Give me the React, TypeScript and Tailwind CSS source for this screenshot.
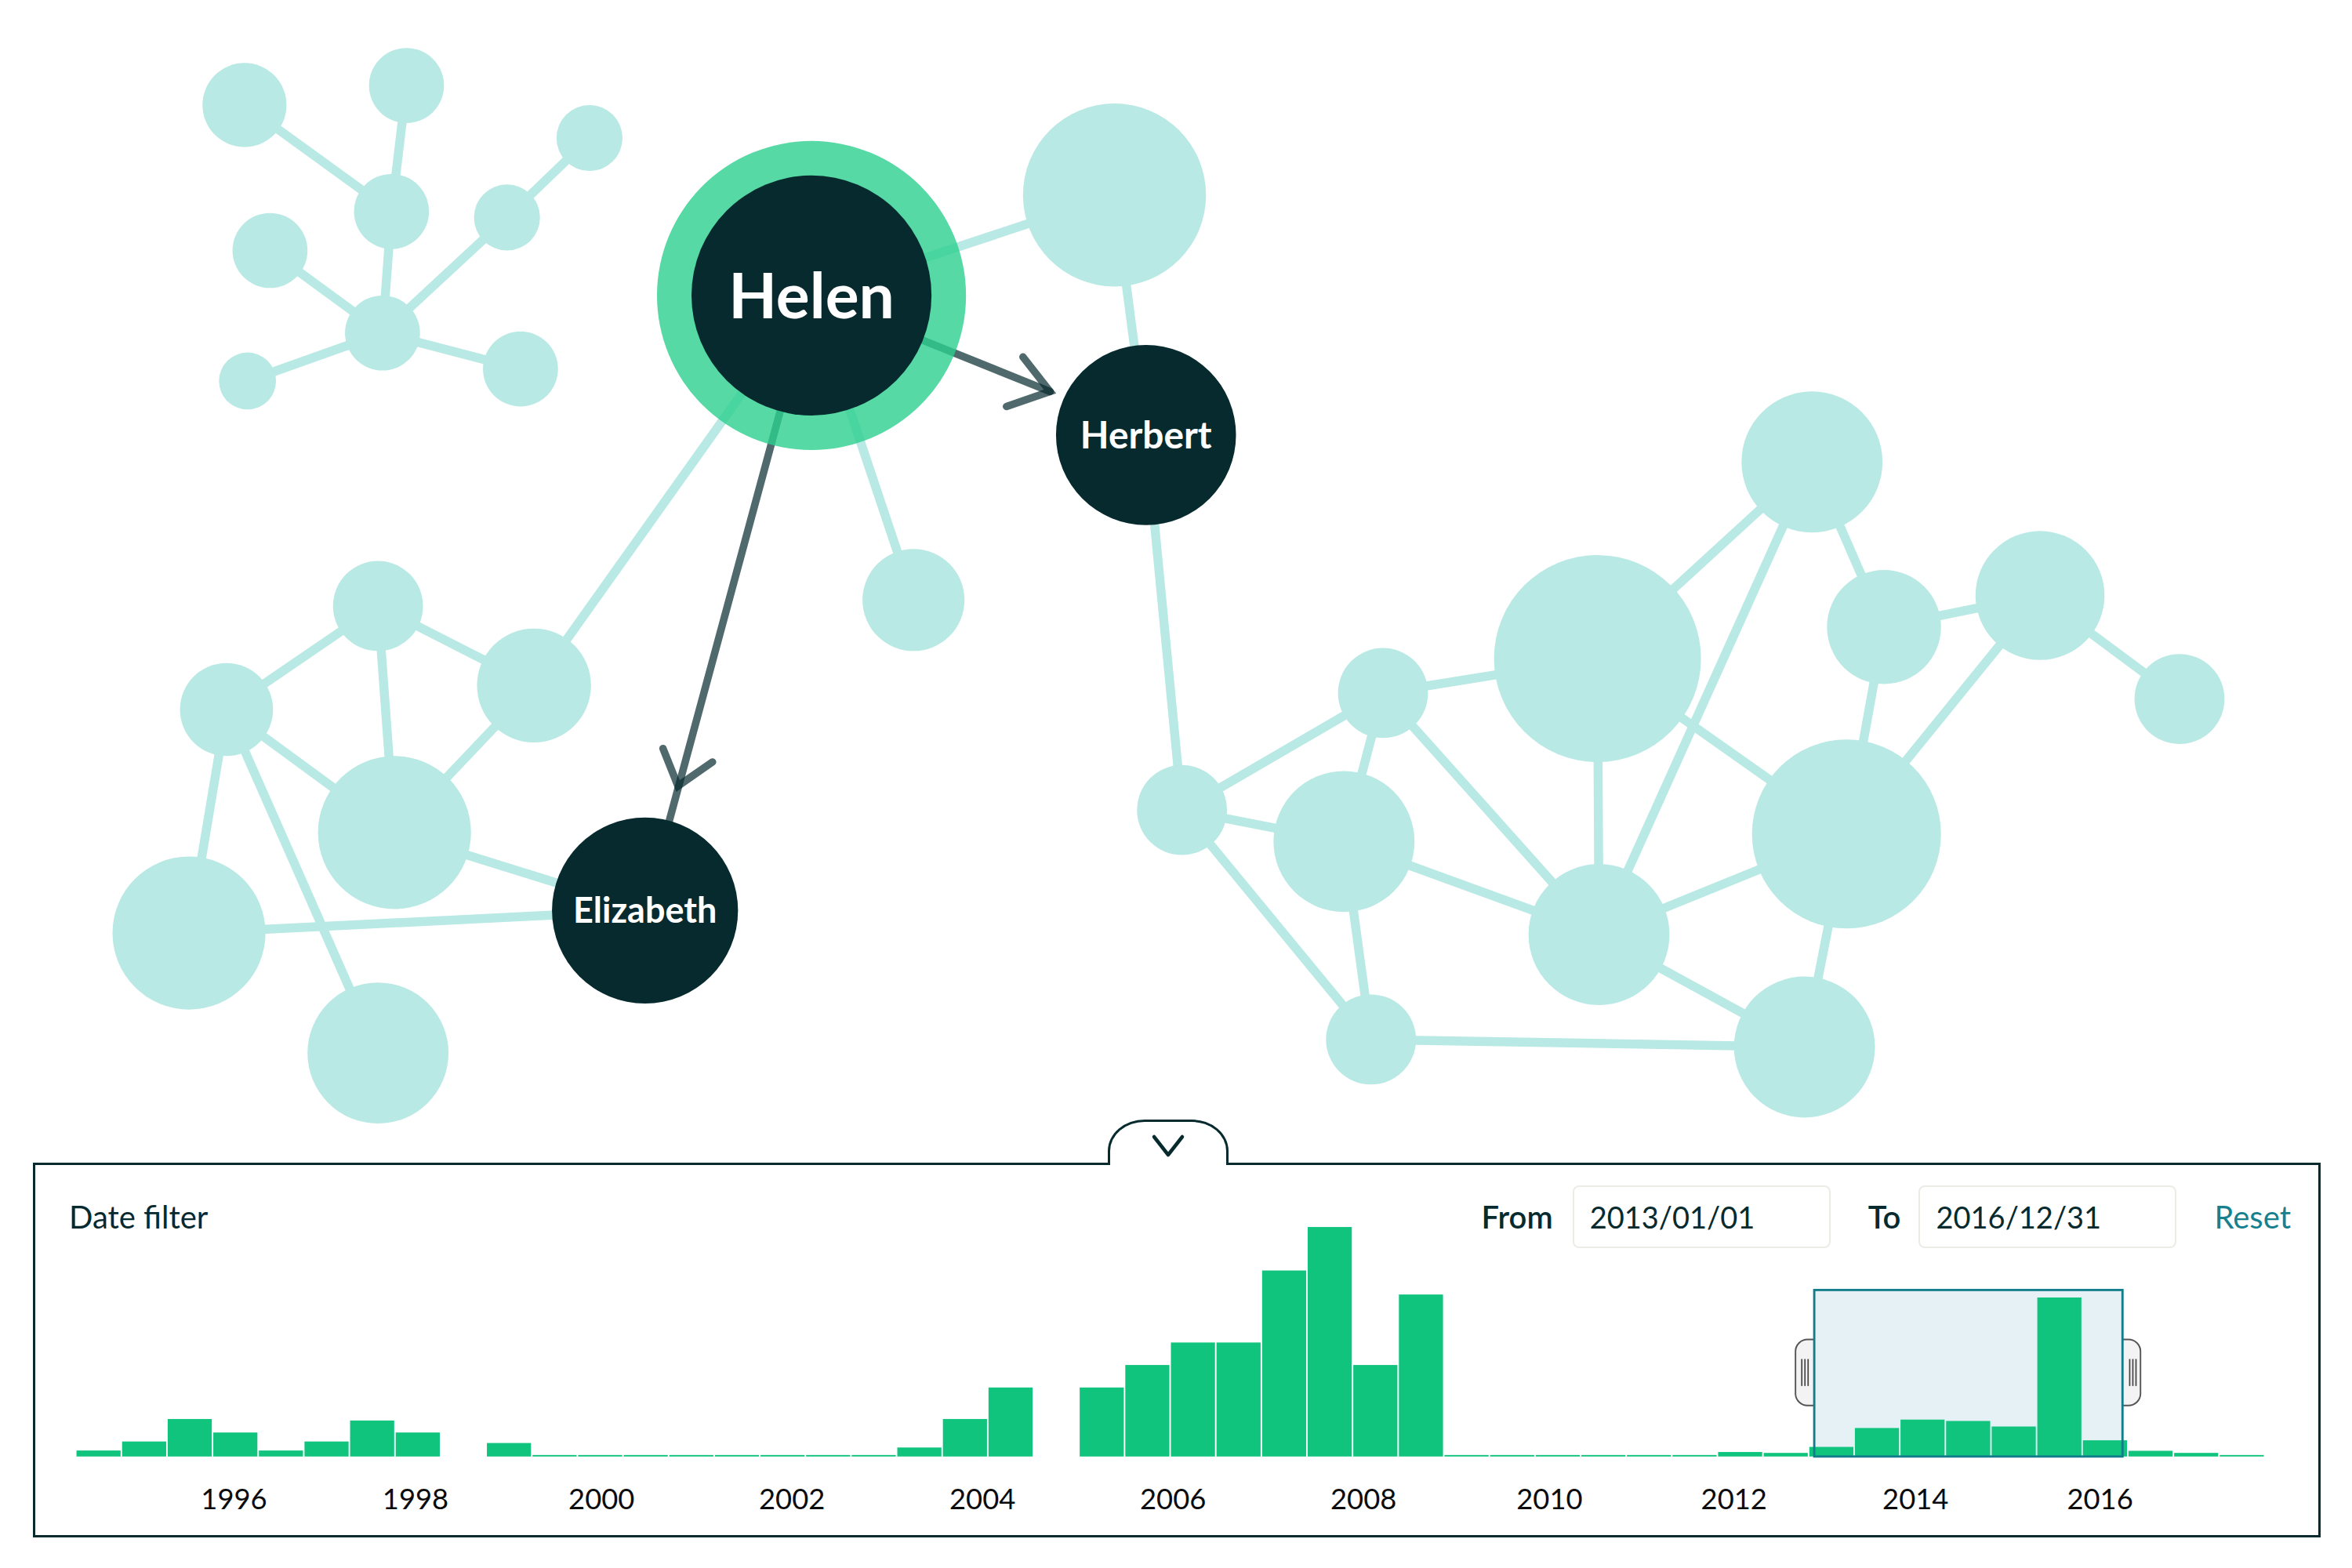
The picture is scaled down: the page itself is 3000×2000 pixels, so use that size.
const S = 3000 / 1568;

const TEAL = "#b8e9e4";
const DARK = "#062a2e";

type Node = { id: string; x: number; y: number; r: number };

const nodes: Node[] = [
  { id: "a1", x: 163, y: 70, r: 28 },
  { id: "a2", x: 271, y: 57, r: 25 },
  { id: "a3", x: 393, y: 92, r: 22 },
  { id: "a4", x: 261, y: 141, r: 25 },
  { id: "a5", x: 338, y: 145, r: 22 },
  { id: "a6", x: 180, y: 167, r: 25 },
  { id: "a7", x: 255, y: 222, r: 25 },
  { id: "a8", x: 347, y: 246, r: 25 },
  { id: "a9", x: 165, y: 254, r: 19 },
  { id: "b1", x: 743, y: 130, r: 61 },
  { id: "c1", x: 609, y: 400, r: 34 },
  { id: "d1", x: 252, y: 404, r: 30 },
  { id: "d2", x: 151, y: 473, r: 31 },
  { id: "d3", x: 356, y: 457, r: 38 },
  { id: "d4", x: 263, y: 555, r: 51 },
  { id: "d5", x: 126, y: 622, r: 51 },
  { id: "d6", x: 252, y: 702, r: 47 },
  { id: "e1", x: 788, y: 540, r: 30 },
  { id: "e2", x: 922, y: 462, r: 30 },
  { id: "e3", x: 896, y: 561, r: 47 },
  { id: "e4", x: 914, y: 693, r: 30 },
  { id: "f1", x: 1065, y: 439, r: 69 },
  { id: "f2", x: 1066, y: 623, r: 47 },
  { id: "g1", x: 1208, y: 308, r: 47 },
  { id: "g2", x: 1256, y: 418, r: 38 },
  { id: "g3", x: 1360, y: 397, r: 43 },
  { id: "g4", x: 1453, y: 466, r: 30 },
  { id: "h1", x: 1231, y: 556, r: 63 },
  { id: "h2", x: 1203, y: 698, r: 47 },
];

const people: Record<string, { x: number; y: number; r: number }> = {
  helen: { x: 541, y: 197, r: 80 },
  herbert: { x: 764, y: 290, r: 60 },
  elizabeth: { x: 430, y: 607, r: 62 },
};

const pos = (id: string) => {
  const n = nodes.find((n) => n.id === id);
  if (n) return n;
  return people[id];
};

const edges: [string, string][] = [
  ["a1", "a4"], ["a2", "a4"], ["a4", "a7"], ["a3", "a5"], ["a5", "a7"],
  ["a6", "a7"], ["a7", "a9"], ["a7", "a8"],
  ["helen", "b1"], ["helen", "c1"], ["helen", "d3"], ["b1", "herbert"],
  ["herbert", "e1"],
  ["d1", "d2"], ["d1", "d3"], ["d1", "d4"], ["d2", "d4"], ["d2", "d5"],
  ["d2", "d6"], ["d3", "d4"], ["d4", "elizabeth"], ["d5", "elizabeth"],
  ["e1", "e2"], ["e1", "e3"], ["e1", "e4"], ["e2", "f1"], ["e2", "e3"],
  ["e2", "f2"], ["e3", "f2"], ["e3", "e4"], ["e4", "h2"], ["f1", "f2"],
  ["f1", "g1"], ["f1", "h1"], ["f2", "h1"], ["f2", "h2"], ["f2", "g1"],
  ["g1", "g2"], ["g2", "h1"], ["g2", "g3"], ["g3", "h1"], ["g3", "g4"],
  ["h1", "h2"],
];

// half-year bins, heights in px of the 1568-wide drawing
const bars = [
  4, 10, 25, 16, 4, 10, 24, 16, 0, 9,
  1, 1, 1, 1, 1, 1, 1, 1, 6, 25,
  46, 0, 46, 61, 76, 76, 124, 153, 61, 108,
  1, 1, 1, 1, 1, 1, 3, 2.4, 6.4, 19,
  24.6, 23.7, 20, 106, 10.8, 3.8, 2.4, 1,
];
const BASE = 971;
const X0 = 51;
const P = 30.4;

const years = [
  [1996, 156], [1998, 277], [2000, 401], [2002, 528], [2004, 655], [2006, 782],
  [2008, 909], [2010, 1033], [2012, 1156], [2014, 1277], [2016, 1400],
];

function Graph() {
  const h = people.helen;
  return (
    <svg
      width={3000}
      height={1428}
      viewBox={`0 0 1568 ${1428 / S}`}
      className="block shrink-0 overflow-visible"
    >
      {edges.map(([a, b]) => {
        const p = pos(a);
        const q = pos(b);
        return (
          <line key={a + b} x1={p.x} y1={p.y} x2={q.x} y2={q.y} stroke={TEAL} strokeWidth={6} />
        );
      })}
      {nodes.map((n) => (
        <circle key={n.id} cx={n.x} cy={n.y} r={n.r} fill={TEAL} />
      ))}

      {/* directed links */}
      <g stroke={DARK} strokeOpacity={0.7} strokeWidth={5} strokeLinecap="round" fill="none">
        <line x1={h.x} y1={h.y} x2={700} y2={261} />
        <polyline points="682,238 700,261 671,271" />
        <line x1={h.x} y1={h.y} x2={430} y2={607} />
        <polyline points="442,499 452,524 475,508" />
      </g>

      <circle cx={h.x} cy={h.y} r={103} fill="#2ccf8e" fillOpacity={0.8} />
      <circle cx={h.x} cy={h.y} r={h.r} fill={DARK} />
      <circle cx={people.herbert.x} cy={people.herbert.y} r={people.herbert.r} fill={DARK} />
      <circle cx={people.elizabeth.x} cy={people.elizabeth.y} r={people.elizabeth.r} fill={DARK} />

      <g fill="#ffffff" fontFamily="Lato, sans-serif" fontWeight={700} textAnchor="middle">
        <text x={541} y={212} fontSize={42}>Helen</text>
        <text x={764} y={299} fontSize={25}>Herbert</text>
        <text x={430} y={615} fontSize={23.5}>Elizabeth</text>
      </g>
    </svg>
  );
}

function Histogram() {
  return (
    <svg
      width={2912}
      height={366}
      viewBox={`${45 / S} ${1592 / S} ${2912 / S} ${366 / S}`}
      className="block overflow-visible"
    >
      {/* brush handles */}
      {[1197, 1403].map((x) => (
        <rect key={x} x={x} y={893} width={24} height={44} rx={8} fill="#f3f3f3" stroke="#555" strokeWidth={1} />
      ))}
      <g stroke="#444" strokeWidth={0.9}>
        <line x1={1201.2} y1={906} x2={1201.2} y2={924} />
        <line x1={1203.3} y1={906} x2={1203.3} y2={924} />
        <line x1={1205.4} y1={906} x2={1205.4} y2={924} />
        <line x1={1419.8} y1={906} x2={1419.8} y2={924} />
        <line x1={1421.9} y1={906} x2={1421.9} y2={924} />
        <line x1={1424} y1={906} x2={1424} y2={924} />
      </g>
      <rect x={1209.5} y={860} width={205.5} height={111} fill="#e5f1f5" />

      {bars.map((v, i) =>
        v > 0 ? (
          <rect key={i} x={X0 + i * P} y={BASE - v} width={P - 1} height={v} fill="#11c47e" />
        ) : null
      )}

      <rect x={1209.5} y={860} width={205.5} height={111} fill="none" stroke="#147d8c" strokeWidth={1.5} />

      <g fill="#0b0b0b" fontFamily="Lato, sans-serif" fontSize={19} textAnchor="middle">
        {years.map(([y, x]) => (
          <text key={y} x={x} y={1006}>{y}</text>
        ))}
      </g>
    </svg>
  );
}

export default function App() {
  return (
    <div className="w-[3000px] h-[2000px] bg-white flex flex-col font-['Lato',sans-serif] text-[#062a2e]">
      <Graph />

      <div className="relative mt-[55px] ml-[42px] w-[2918px] h-[478px] border-[3px] border-[#062a2e] flex flex-col">
        <div className="absolute left-[1368px] top-[-58px] w-[154px] h-[58px] border-[3px] border-b-0 border-[#062a2e] rounded-tl-[47px_40px] rounded-tr-[47px_40px] bg-white flex justify-center pt-[15px]">
          <svg width={44} height={31} viewBox="0 0 44 31">
            <polyline points="4,4 22,27 40,4" fill="none" stroke={DARK} strokeWidth={4.5} strokeLinecap="round" strokeLinejoin="round" />
          </svg>
        </div>

        <div className="flex items-center h-[106px] pt-[26px] pl-[43px] pr-[35px]">
          <span className="text-[40px]">Date filter</span>
          <div className="ml-auto flex items-center">
            <span className="text-[40px] font-semibold">From</span>
            <input
              readOnly
              value="2013/01/01"
              className="ml-[25px] w-[329px] h-[80px] border-2 border-[#ecece6] rounded-[8px] pl-[20px] text-[38px] text-[#062a2e] outline-none"
            />
            <span className="ml-[48px] text-[40px] font-semibold">To</span>
            <input
              readOnly
              value="2016/12/31"
              className="ml-[23px] w-[329px] h-[80px] border-2 border-[#ecece6] rounded-[8px] pl-[20px] text-[38px] text-[#062a2e] outline-none"
            />
            <button className="ml-[48px] text-[40px] text-[#16808e]">Reset</button>
          </div>
        </div>

        <Histogram />
      </div>
    </div>
  );
}
